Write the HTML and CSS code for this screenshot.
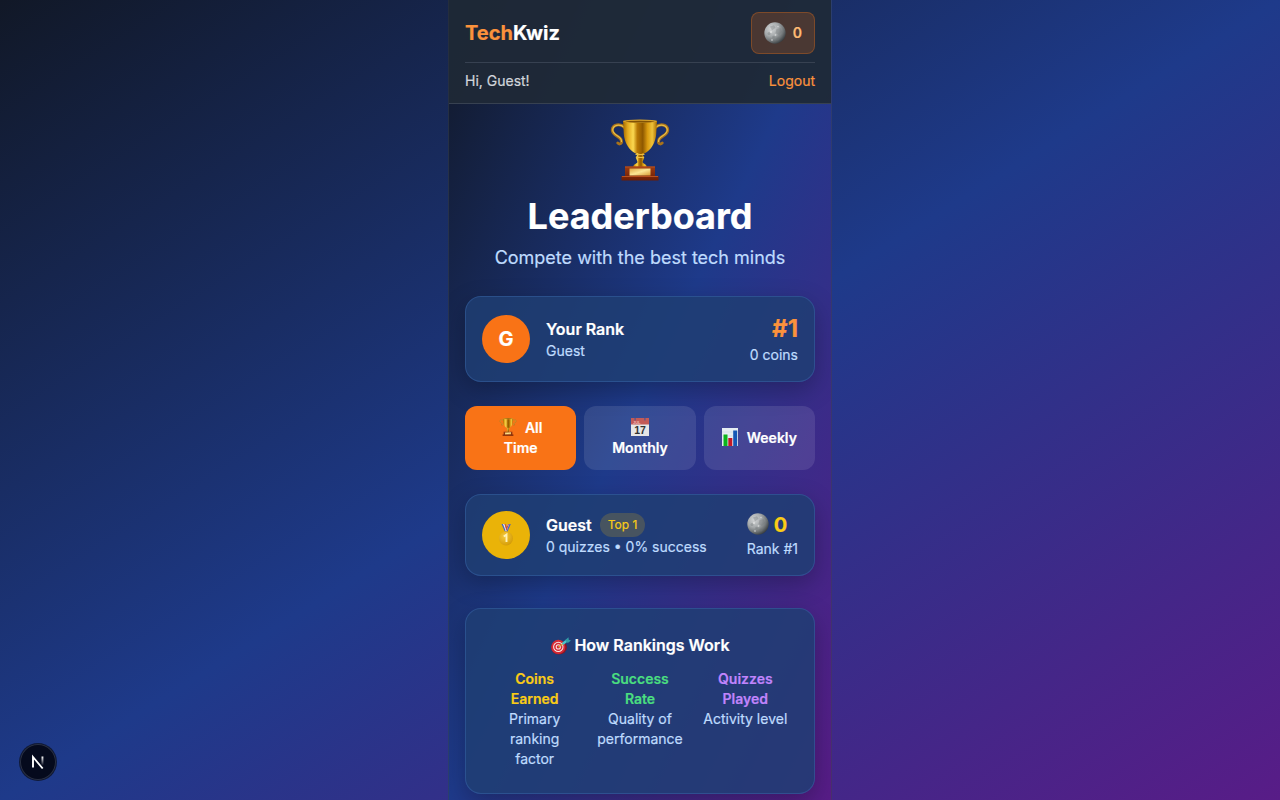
FILE: index.html
```html
<!DOCTYPE html>
<html lang="en">
<head>
<meta charset="utf-8">
<title>TechKwiz – Leaderboard</title>
<link rel="stylesheet" href="styles.css">
</head>
<body>
<svg class="defs" aria-hidden="true">
  <defs>
    <linearGradient id="gold" x1="0" x2="1" y1="0" y2="0">
      <stop offset="0" stop-color="#a66a00"/><stop offset=".14" stop-color="#e3aa1e"/><stop offset=".3" stop-color="#fbd850"/>
      <stop offset=".42" stop-color="#b87804"/><stop offset=".58" stop-color="#8e5800"/><stop offset=".72" stop-color="#d99b10"/>
      <stop offset=".86" stop-color="#efc23a"/><stop offset="1" stop-color="#a96c00"/>
    </linearGradient>
    <linearGradient id="plate" x1="0" x2="1" y1="0" y2="1">
      <stop offset="0" stop-color="#e0a743"/><stop offset=".5" stop-color="#fbe594"/><stop offset="1" stop-color="#d99a35"/>
    </linearGradient>
    <linearGradient id="wood" x1="0" x2="0" y1="0" y2="1">
      <stop offset="0" stop-color="#9d3c12"/><stop offset="1" stop-color="#6b1c05"/>
    </linearGradient>
    <radialGradient id="moonlight" cx=".33" cy=".3" r=".78">
      <stop offset="0" stop-color="#d3d5d6"/><stop offset=".45" stop-color="#a5a9ab"/><stop offset=".75" stop-color="#6c7173"/><stop offset="1" stop-color="#303538"/>
    </radialGradient>
    <radialGradient id="disc" cx=".4" cy=".35" r=".7">
      <stop offset="0" stop-color="#f6ca3c"/><stop offset="1" stop-color="#d39a05"/>
    </radialGradient>
    <linearGradient id="fade" x1="0" x2="0" y1="0" y2="1">
      <stop offset="0" stop-color="#fff"/><stop offset="1" stop-color="#fff" stop-opacity="0"/>
    </linearGradient>
    <symbol id="trophy" viewBox="0 0 60 62">
      <g fill="none" stroke="#a8721a" stroke-width="3" stroke-linecap="round">
        <path d="M14.500 8.500C10 4 2.500 5.500 2.300 11C2.500 18 12.500 16.500 11.500 23.500Q10 26 7.800 24"/>
        <path d="M45.500 8.500C50 4 57.500 5.500 57.700 11C57.500 18 47.500 16.500 48.500 23.500Q50 26 52.200 24"/>
      </g>
      <g fill="none" stroke="#e8be48" stroke-width="1.200" stroke-linecap="round">
        <path d="M14 8C9.500 4.500 3 6 2.700 11C3 17 12 16.500 11.500 22.500"/>
        <path d="M46 8C50.500 4.500 57 6 57.300 11C57 17 48 16.500 48.500 22.500"/>
      </g>
      <path fill="url(#gold)" d="M13 2h34l-.8 13C45.500 24 41 31 34.500 34.500h-9C19 31 14.500 24 13.800 15z"/>
      <ellipse cx="30" cy="2.300" rx="17" ry="1.700" fill="#d6a12a"/>
      <ellipse cx="30" cy="2.600" rx="14.500" ry=".9" fill="#805206"/>
      <path fill="url(#gold)" d="M26 34h8l-1 2.500 1.300 1.700L32.500 43c.8 2 4.500 2.500 4.500 5H23c0-2.500 3.700-3 4.500-5l-1.800-4.800L27 36.500z"/>
      <path d="M25.500 35.500h9M26 38.500h8" stroke="#e9bd42" stroke-width="1.200"/>
      <path fill="url(#wood)" d="M15 47.500h30v9.500h3.500v4.500h-37V57H15z"/>
      <path d="M15 48h30M12 57.500h36" stroke="#b75020"/>
      <path fill="url(#plate)" d="M19.500 49.500h21v7h-21z"/>
    </symbol>
    <symbol id="moon" viewBox="0 0 22 22">
      <circle cx="11" cy="11" r="10.700" fill="url(#moonlight)"/>
      <g fill="#6f7476" opacity=".35">
        <path d="M6 4.500l4-1.300 1.500 2.600L8 8.500zM12.500 7l4-1 1.500 4-3 3-3.500-2z"/>
        <circle cx="5" cy="11.500" r="1.500"/><circle cx="9.500" cy="15" r="1.300"/><circle cx="14" cy="17" r="1.500"/>
      </g>
      <g fill="#eee" opacity=".55"><circle cx="7" cy="10" r="1.200"/><circle cx="11.500" cy="13" r=".9"/><circle cx="8" cy="18" r=".9"/><circle cx="14" cy="4.500" r=".8"/></g>
    </symbol>
    <symbol id="calendar" viewBox="0 0 18 18">
      <path fill="#e6e6e6" d="M0 0h18v18H0z"/>
      <path fill="#c35a57" d="M0 0h18v6.500H0z"/>
      <path fill="#53558d" d="M3.500 0h1.200v2.500H3.500zM13.300 0h1.200v2.500h-1.200z"/>
      <text class="cal-month" x="2" y="5.800">JUL</text>
      <text class="cal-day" x="9" y="16" text-anchor="middle">17</text>
    </symbol>
    <symbol id="chart" viewBox="0 0 16 18">
      <path fill="#e5edf2" d="M0 0h16v18H0z"/>
      <path stroke="#c5d4de" stroke-width=".5" d="M0 4h16M0 8h16M0 12h16"/>
      <path fill="#0bb51c" d="M1.500 6.500h4V18h-4z"/><path fill="#c31926" d="M6.300 10h4v8h-4z"/><path fill="#1558b5" d="M11.200 2.500h4V18h-4z"/>
    </symbol>
    <symbol id="medal" viewBox="0 0 16 24">
      <path fill="#4566bd" d="M3.500 1h3l2.800 8H7z"/><path fill="#eee" d="M5 1h1.500l2.500 7H7.700z"/>
      <path fill="#4566bd" d="M9.800 1h3L9.300 9H7z"/><path fill="#eee" d="M9.800 1h1.500L8.600 8H7.300z"/><path fill="#c84746" d="M6.500 1h1l1.300 3L10 1h1L8.500 8z"/>
      <circle cx="8" cy="15.500" r="7" fill="url(#disc)"/>
      <path d="M8 8.500v2" stroke="#f3bd29" stroke-width="3"/>
      <path d="M5.800 13.600l2.700-2v7.400" fill="none" stroke="#fff2b8" stroke-width="1.900"/>
    </symbol>
    <symbol id="target" viewBox="0 0 20 18">
      <ellipse cx="8" cy="10.500" rx="7.900" ry="7" fill="#8c1422"/>
      <circle cx="7.300" cy="9.900" r="7.100" fill="#d42a35"/><circle cx="7.300" cy="9.900" r="5.200" fill="#f7e9e8"/>
      <circle cx="7.300" cy="9.900" r="4.200" fill="#d42a35"/><circle cx="7.300" cy="9.900" r="2.600" fill="#f7e9e8"/><circle cx="7.300" cy="9.900" r="1.600" fill="#d42a35"/>
      <path d="M7.500 10l6-4.500" stroke="#d3a53b" stroke-width="1.500"/>
      <path d="M11.500 7L16 3.500" stroke="#49c4c9" stroke-width="2.500"/><path fill="#329da7" d="M14 3.200L17.500.3l.2 2.500 2.300.6-3.200 2.700z"/>
    </symbol>
  </defs>
</svg>

<div class="phone">
  <header class="header">
    <div class="header-top">
      <div class="logo"><span>Tech</span>Kwiz</div>
      <div class="coin-pill"><svg class="moon"><use href="#moon"/></svg><span>0</span></div>
    </div>
    <div class="header-user"><span>Hi, Guest!</span><a class="logout">Logout</a></div>
  </header>

  <main class="content">
    <svg class="hero-trophy"><use href="#trophy"/></svg>
    <h1>Leaderboard</h1>
    <p class="subtitle">Compete with the best tech minds</p>

    <section class="card row">
      <div class="avatar">G</div>
      <div class="info"><div class="name">Your Rank</div><div class="muted">Guest</div></div>
      <div class="score"><div class="rank">#1</div><div class="muted">0 coins</div></div>
    </section>

    <nav class="tabs">
      <button class="tab active"><span><svg class="tab-icon trophy"><use href="#trophy"/></svg>All<br>Time</span></button>
      <button class="tab"><span><svg class="tab-icon calendar"><use href="#calendar"/></svg><br>Monthly</span></button>
      <button class="tab"><span><svg class="tab-icon chart"><use href="#chart"/></svg>Weekly</span></button>
    </nav>

    <section class="card row">
      <div class="avatar gold"><svg class="medal"><use href="#medal"/></svg></div>
      <div class="info">
        <div class="name-row"><span class="name">Guest</span><span class="badge">Top 1</span></div>
        <div class="muted">0 quizzes • 0% success</div>
      </div>
      <div class="coins"><div class="coin-total"><svg class="moon"><use href="#moon"/></svg><span>0</span></div><div class="muted">Rank #1</div></div>
    </section>

    <section class="card rules">
      <h2><svg class="target"><use href="#target"/></svg>How Rankings Work</h2>
      <div class="rules-grid">
        <div><strong class="yellow">Coins Earned</strong>Primary ranking factor</div>
        <div><strong class="green">Success Rate</strong>Quality of performance</div>
        <div><strong class="purple">Quizzes Played</strong>Activity level</div>
      </div>
    </section>
  </main>
</div>

<div class="dev-badge">
  <svg viewBox="0 0 16 16" width="16" height="16"><path d="M3 13.500V3l9.700 11.500" fill="none" stroke="#fff" stroke-width="1.900"/><path d="M11.500 2.500h1.900v9h-1.900z" fill="url(#fade)"/></svg>
</div>
</body>
</html>
```
FILE: styles.css
```css
* { box-sizing: border-box; margin: 0; padding: 0; }
body {
  height: 800px;
  overflow: hidden;
  font-family: Inter, "Liberation Sans", sans-serif;
  font-size: 16px;
  line-height: 24px;
  color: #fff;
  -webkit-text-stroke: .2px currentColor;
  background: linear-gradient(to bottom right, #111827, #1e3a8a, #581c87);
}
svg { display: block; flex: none; -webkit-text-stroke: 0; }
.defs { position: absolute; width: 0; height: 0; }

.phone {
  width: 384px;
  height: 800px;
  margin: 0 auto;
  overflow: hidden;
  border: solid rgba(55, 65, 81, .5);
  border-width: 0 1px;
  background: linear-gradient(to bottom right, #111827, #1e3a8a, #581c87) border-box;
}

.header {
  height: 104px;
  padding: 12px 16px;
  background: rgba(31, 41, 55, .95);
  border-bottom: 1px solid #374151;
}
.header-top { display: flex; align-items: center; justify-content: space-between; height: 42px; }
.logo { font-size: 20px; line-height: 28px; font-weight: 700; }
.logo span { color: #fb923c; }
.coin-pill {
  display: flex;
  align-items: center;
  justify-content: space-between;
  width: 64px;
  height: 42px;
  padding: 0 12px;
  border: 1px solid rgba(249, 115, 22, .3);
  border-radius: 8px;
  background: rgba(249, 115, 22, .2);
  color: #fdba74;
  font-size: 14px;
  font-weight: 600;
}
.moon { width: 22px; height: 22px; }
.header-user {
  display: flex;
  justify-content: space-between;
  margin-top: 8px;
  padding-top: 8px;
  border-top: 1px solid #374151;
  color: #d1d5db;
  font-size: 14px;
  line-height: 20px;
}
.logout { color: #fb923c; }

.content { display: flex; flex-direction: column; padding: 15px 16px 0; }
.hero-trophy { width: 60px; height: 62px; margin: 0 auto 15px; }
h1 { font-size: 36px; line-height: 40px; font-weight: 700; text-align: center; margin-bottom: 8px; }
.subtitle { font-size: 18px; line-height: 28px; color: #bfdbfe; text-align: center; margin-bottom: 24px; }

.card {
  border: 1px solid rgba(96, 165, 250, .2);
  border-radius: 16px;
  background: rgba(31, 62, 114, .84);
  box-shadow: 0 8px 24px rgba(0, 0, 0, .25);
}
.row { display: flex; align-items: center; padding: 16px; margin-bottom: 24px; }
.avatar {
  display: flex;
  align-items: center;
  justify-content: center;
  width: 48px;
  height: 48px;
  margin-right: 16px;
  border-radius: 50%;
  background: #f97316;
  font-size: 20px;
  font-weight: 700;
}
.avatar.gold { background: #eab308; }
.medal { width: 16px; height: 24px; }
.info { flex: 1; }
.name { font-weight: 600; }
.muted { font-size: 14px; line-height: 20px; color: #bfdbfe; }
.score { text-align: right; }
.rank { font-size: 24px; line-height: 32px; font-weight: 700; color: #fb923c; }

.tabs { display: grid; grid-template-columns: repeat(3, 1fr); gap: 8px; margin-bottom: 24px; }
.tab {
  height: 64px;
  border: 0;
  border-radius: 12px;
  background: rgba(255, 255, 255, .1);
  color: #fff;
  font: 600 14px/20px Inter, "Liberation Sans", sans-serif;
  -webkit-text-stroke: .2px currentColor;
}
.tab.active { background: #f97316; }
.tab-icon { display: inline-block; height: 18px; vertical-align: -3px; }
.tab-icon.trophy { width: 18px; height: 18px; margin-right: 8px; }
.tab-icon.calendar { width: 18px; }
.tab-icon.chart { width: 16px; margin-right: 9px; }
.cal-month { font: 700 4px "Liberation Sans", sans-serif; fill: #eeb5b2; }
.cal-day { font: 700 10.5px "Liberation Sans", sans-serif; fill: #333; }

.name-row { display: flex; align-items: center; gap: 8px; height: 24px; }
.badge {
  padding: 4px 8px;
  border-radius: 12px;
  background: rgba(234, 179, 8, .2);
  color: #facc15;
  font-size: 12px;
  line-height: 16px;
}
.coin-total { display: flex; align-items: center; gap: 5px; font-size: 20px; line-height: 28px; font-weight: 700; color: #facc15; }
.coin-total .moon { margin-bottom: 2px; }

.rules { margin-top: 8px; padding: 24px; text-align: center; }
.rules h2 { display: flex; justify-content: center; align-items: center; gap: 3px; margin-bottom: 12px; padding-left: 1px; font-size: 16px; line-height: 24px; font-weight: 600; }
.target { width: 20px; height: 18px; margin-top: 2px; }
.rules-grid { display: grid; grid-template-columns: repeat(3, minmax(0, 1fr)); gap: 16px; font-size: 14px; line-height: 20px; color: #bfdbfe; }
.rules-grid strong { display: block; padding: 0 12px; font-weight: 600; }
.yellow { color: #facc15; }
.green { color: #4ade80; }
.purple { color: #c084fc; }

/* Floating dev indicator */
.dev-badge {
  position: fixed;
  left: 20px;
  bottom: 20px;
  display: flex;
  align-items: center;
  justify-content: center;
  width: 36px;
  height: 36px;
  border-radius: 50%;
  background: #050a1d;
  box-shadow: inset 0 0 0 1px #293044, 0 0 0 1px #101a38;
}
```
